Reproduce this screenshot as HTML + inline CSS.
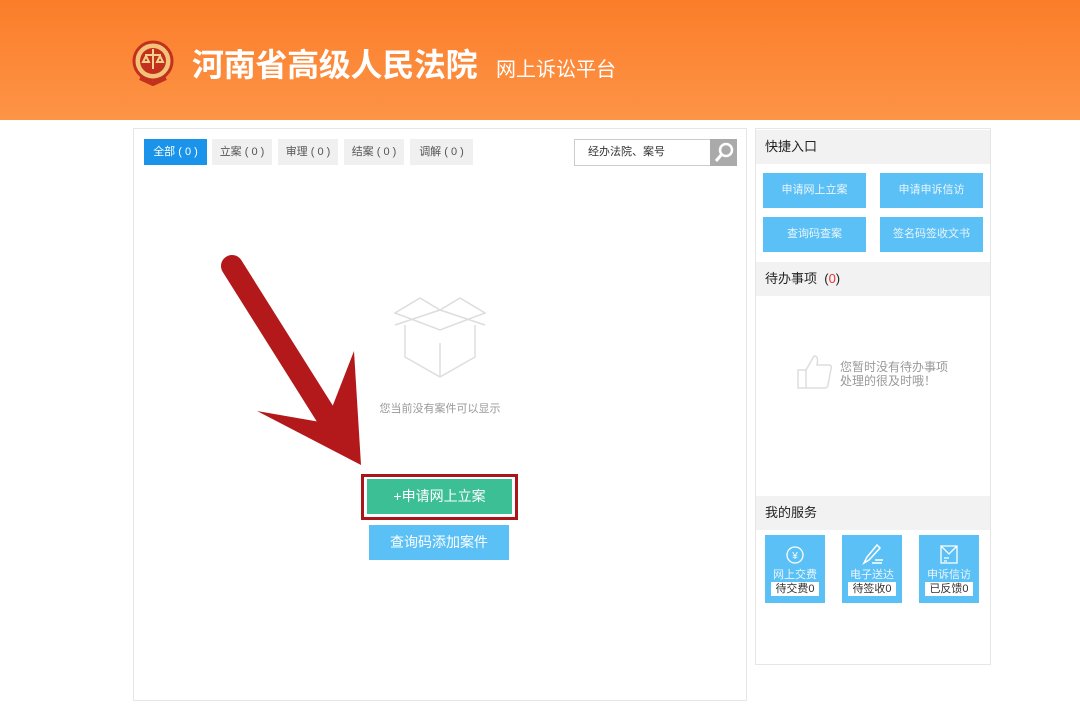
<!DOCTYPE html>
<html><head><meta charset="utf-8">
<style>
*{margin:0;padding:0;box-sizing:border-box}
body{width:1080px;height:719px;background:#fff;font-family:"Liberation Sans","Noto Sans CJK SC",sans-serif;position:relative;overflow:hidden}
.a{position:absolute}
.hdr{left:0;top:0;width:1080px;height:120px;background:linear-gradient(#fb7d2a,#fd9446)}
.tab{position:absolute;top:139px;height:26px;background:#f0f0f0;color:#555;font-size:11px;line-height:26px;text-align:center}
.qb{position:absolute;width:103px;height:35px;background:#5bc0f5;color:#eaf6fd;font-size:11px;line-height:35px;text-align:center}
.sh{position:absolute;left:756px;width:234px;height:34px;background:#f2f2f2;font-size:13px;line-height:34px;padding-left:9px;color:#222}
.tile{position:absolute;top:535px;width:60px;height:68px;background:#5bc0f5;color:#eaf6fd;font-size:11px;text-align:center}
.tile .l{position:absolute;top:31px;width:100%}
.tile .c{position:absolute;left:6px;right:6px;top:47px;height:14px;background:#fff;color:#333;font-size:11px;line-height:14px}
</style></head><body>
<div class="a hdr"></div>
<svg class="a" style="left:132px;top:40px" width="42" height="46" viewBox="0 0 42 46">
<circle cx="21" cy="21" r="19" fill="#f3c37a" stroke="#c2301e" stroke-width="3"/>
<circle cx="21" cy="21" r="13" fill="#c2301e"/>
<path d="M21 9v20M13 15h16M11 22l3-6 3 6zM25 22l3-6 3 6z" stroke="#f6d08a" stroke-width="2" fill="none"/>
<path d="M8 38l13 6 13-6" stroke="#c2301e" stroke-width="4" fill="none"/>
</svg>
<div class="a" style="left:192px;top:45px;color:#fff;font-size:32px;font-weight:bold;line-height:40px;letter-spacing:-0.3px">河南省高级人民法院</div>
<div class="a" style="left:496px;top:57px;color:#fff;font-size:20px;line-height:26px">网上诉讼平台</div>

<div class="a" style="left:133px;top:128px;width:614px;height:573px;border:1px solid #e6e6e6"></div>
<div class="tab" style="left:144px;width:63px;background:#1a94ea;color:#fff">全部 ( 0 )</div>
<div class="tab" style="left:212px;width:60px">立案 ( 0 )</div>
<div class="tab" style="left:278px;width:60px">审理 ( 0 )</div>
<div class="tab" style="left:344px;width:60px">结案 ( 0 )</div>
<div class="tab" style="left:410px;width:63px">调解 ( 0 )</div>
<div class="a" style="left:574px;top:139px;width:137px;height:27px;border:1px solid #ccc;font-size:11px;line-height:25px;padding-left:13px;color:#333">经办法院、案号</div>
<div class="a" style="left:710px;top:139px;width:27px;height:27px;background:#aaa"></div>
<svg class="a" style="left:710px;top:139px" width="27" height="27"><circle cx="16" cy="11" r="6" fill="none" stroke="#fff" stroke-width="2.5"/><path d="M12 15l-6 7" stroke="#fff" stroke-width="3"/></svg>

<svg class="a" style="left:390px;top:285px" width="100" height="95" viewBox="0 0 100 95">
<g fill="none" stroke="#ddd" stroke-width="1.5">
<path d="M5 28l25-15 20 12 20-12 25 15-45 17z"/><path d="M50 25l45 15M50 25L5 40"/><path d="M15 40v32l35 20 35-20V40"/><path d="M50 58v34"/></g></svg>
<div class="a" style="left:340px;top:400px;width:200px;text-align:center;font-size:11px;color:#999">您当前没有案件可以显示</div>
<div class="a" style="left:361px;top:474px;width:157px;height:46px;border:3px solid #a8161a;background:#fff"></div>
<div class="a" style="left:367px;top:479px;width:145px;height:35px;background:#3cbf94;color:#fff;font-size:14px;line-height:35px;text-align:center">+申请网上立案</div>
<div class="a" style="left:369px;top:525px;width:140px;height:35px;background:#5bc0f5;color:#fff;font-size:14px;line-height:35px;text-align:center">查询码添加案件</div>

<svg class="a" style="left:0;top:0" width="1080" height="719">
<path d="M232 266L332 425" stroke="#b3191b" stroke-width="22" stroke-linecap="round"/>
<path d="M361 465L257 411L326 423L354 351Z" fill="#b3191b"/>
</svg>

<div class="a" style="left:755px;top:128px;width:236px;height:537px;border:1px solid #e6e6e6"></div>
<div class="sh" style="top:130px">快捷入口</div>
<div class="qb" style="left:763px;top:173px">申请网上立案</div>
<div class="qb" style="left:880px;top:173px">申请申诉信访</div>
<div class="qb" style="left:763px;top:217px">查询码查案</div>
<div class="qb" style="left:880px;top:217px">签名码签收文书</div>
<div class="sh" style="top:262px">待办事项 &nbsp;(<span style="color:#e33">0</span>)</div>
<svg class="a" style="left:796px;top:354px" width="36" height="36"><path d="M2 16h8v18H2zM10 16l8-14c4 0 4 4 3 9h12c2 0 3 2 2 4l-3 16c0 2-2 3-3 3H10" fill="none" stroke="#ddd" stroke-width="1.5"/></svg>
<div class="a" style="left:840px;top:360px;font-size:12px;line-height:14px;color:#999">您暂时没有待办事项<br>处理的很及时哦！</div>
<div class="sh" style="top:496px">我的服务</div>
<div class="tile" style="left:765px"><svg width="60" height="32"><circle cx="30" cy="20" r="8" fill="none" stroke="#fff" stroke-width="1.3"/><text x="30" y="24" fill="#fff" font-size="10" text-anchor="middle">¥</text></svg><div class="l">网上交费</div><div class="c">待交费0</div></div>
<div class="tile" style="left:842px"><svg width="60" height="32"><path d="M22 28l3-6 10-12 3 3-11 12zM30 28h10M33 25h8" stroke="#fff" stroke-width="1.5" fill="none"/></svg><div class="l">电子送达</div><div class="c">待签收0</div></div>
<div class="tile" style="left:919px"><svg width="60" height="32"><path d="M22 11h16v17H22zM22 11l8 8 8-8M25 23h5M25 26h3" stroke="#fff" stroke-width="1.3" fill="none"/></svg><div class="l">申诉信访</div><div class="c">已反馈0</div></div>
</body></html>
